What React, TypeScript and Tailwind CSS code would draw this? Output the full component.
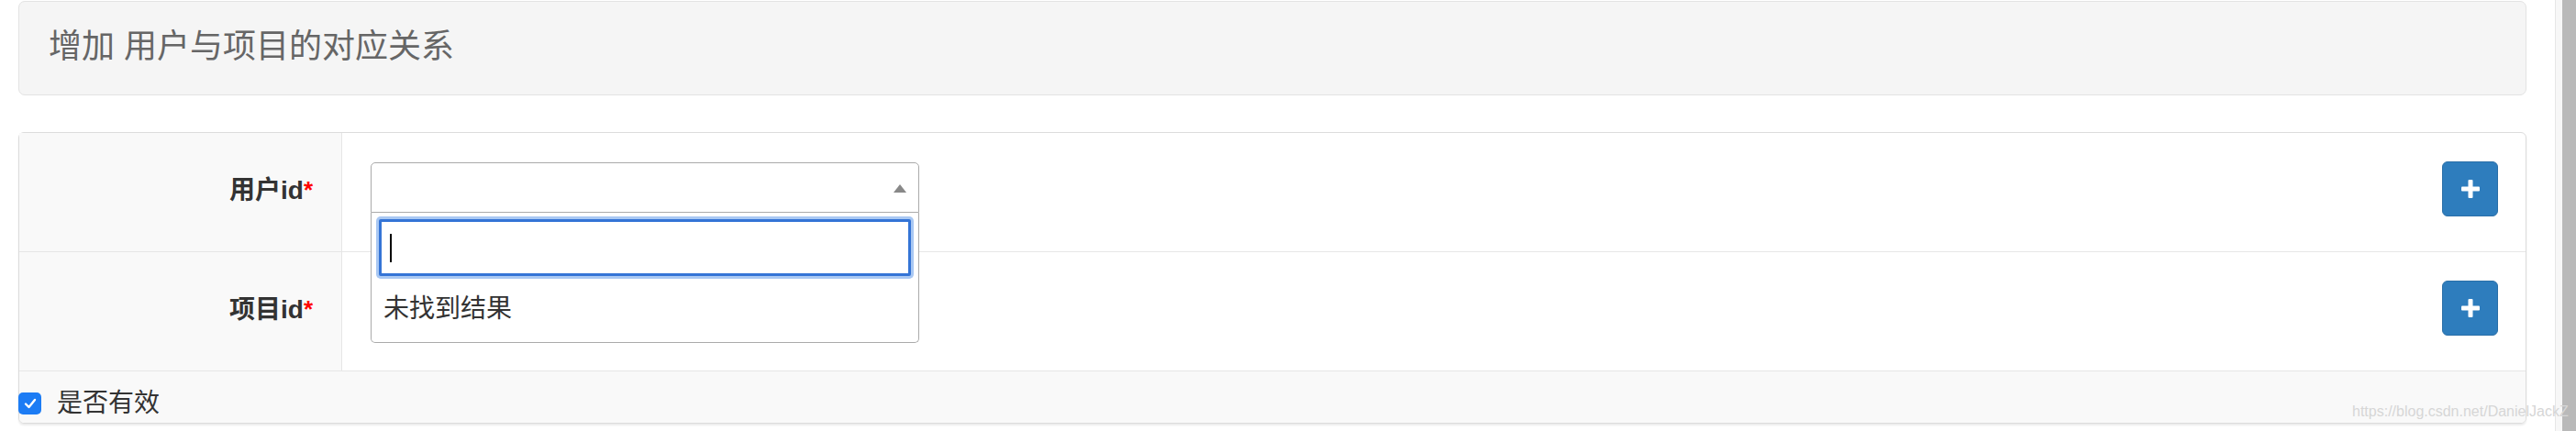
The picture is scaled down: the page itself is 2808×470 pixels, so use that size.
const font = "font-['Liberation_Sans','Noto_Sans_CJK_SC',sans-serif]";

function PlusButton() {
  return (
    <button className="w-[61px] h-[60px] rounded-[6px] bg-[#2e7dbd] border border-[#2a6fa8] flex items-center justify-center">
      <svg width="20" height="20" viewBox="0 0 20 20">
        <rect x="0" y="7.5" width="20" height="5" rx="1" fill="#fff" />
        <rect x="7.5" y="0" width="5" height="20" rx="1" fill="#fff" />
      </svg>
    </button>
  );
}

function Label({ text }: { text: string }) {
  return (
    <div className="w-[352px] shrink-0 bg-[#f9f9f9] border-r border-[#e6e6e6] flex justify-end pr-[31px] pt-[43px]">
      <span className="text-[28px] leading-[40px] font-bold text-[#333]">
        {text}
        <span className="text-[#ff0000] text-[26px] font-bold leading-none align-top relative top-[6px]">*</span>
      </span>
    </div>
  );
}

function SelectBox({ open }: { open?: boolean }) {
  return (
    <div className="relative w-[598px]">
      <div className="h-[55px] border border-[#aaa] rounded-t-[5px] bg-white flex items-center justify-end pr-[13px]">
        <svg width="14" height="9" viewBox="0 0 14 9" className="mt-[2px]">
          <path d="M7 0 L14 9 L0 9 Z" fill="#888" />
        </svg>
      </div>
      {open && (
        <div className="absolute z-10 left-0 top-full w-[598px] h-[142px] bg-white border border-t-0 border-[#aaa] rounded-b-[5px]">
          <div className="mx-[8px] mt-[7px] h-[62px] border-[3px] border-[#3474d6] ring-[3px] ring-[#a9c8f3] rounded-[2px] bg-white flex items-center pl-[9px]">
            <div className="w-[2px] h-[31px] bg-black" />
          </div>
          <div className="pl-[13px] pt-[16px] text-[28px] leading-[40px] text-[#333]">未找到结果</div>
        </div>
      )}
    </div>
  );
}

export default function App() {
  return (
    <div className={`relative w-[2808px] h-[470px] bg-white flex ${font}`}>
      <div className="flex-1 pl-[20px] pr-[31px] pt-[1px]">
        <div className="h-[103px] bg-[#f5f5f5] border border-[#e3e3e3] rounded-[7px] flex items-center pl-[32px] pb-[3px]">
          <h3 className="text-[36px] leading-[48px] text-[#666]">增加 用户与项目的对应关系</h3>
        </div>

        <div className="mt-[40px] border border-[#dcdcdc] rounded-[6px] shadow-[0_2px_2px_rgba(0,0,0,0.08)]">
          <div className="h-[130px] flex border-b border-[#e6e6e6]">
            <Label text="用户id" />
            <div className="flex-1 flex items-start pl-[31px] pr-[30px] pt-[32px]">
              <div className="relative z-10">
                <SelectBox open />
              </div>
              <div className="ml-auto -mt-[1px]">
                <PlusButton />
              </div>
            </div>
          </div>

          <div className="h-[130px] flex border-b border-[#e6e6e6]">
            <Label text="项目id" />
            <div className="flex-1 flex items-start pl-[31px] pr-[30px] pt-[32px]">
              <SelectBox />
              <div className="ml-auto -mt-[1px]">
                <PlusButton />
              </div>
            </div>
          </div>

          <div className="h-[56px] bg-[#f9f9f9] flex items-center rounded-b-[6px] pt-[13px]">
            <div className="-ml-[1px] w-[25px] h-[24px] rounded-[5px] bg-[#1c7cf4] flex items-center justify-center">
              <svg width="16" height="14" viewBox="0 0 16 14">
                <path d="M3 7.5 L6.5 11 L13 3" stroke="#fff" strokeWidth="2.4" fill="none" strokeLinecap="round" strokeLinejoin="round" />
              </svg>
            </div>
            <span className="ml-[17px] text-[28px] leading-[40px] text-[#333]">是否有效</span>
          </div>
        </div>
      </div>

      <div className="w-[23px] h-full flex border-l border-[#e6e6e6]">
        <div className="w-[7px] bg-[#f7f7f7]" />
        <div className="flex-1 bg-[#b9b9b9]" />
      </div>

      <div className="absolute left-[2564px] top-[441px] text-[16px] leading-[16px] text-[#d6d6d6] font-['Liberation_Sans',sans-serif] whitespace-nowrap">
        https://blog.csdn.net/DanielJackZ
      </div>
    </div>
  );
}
